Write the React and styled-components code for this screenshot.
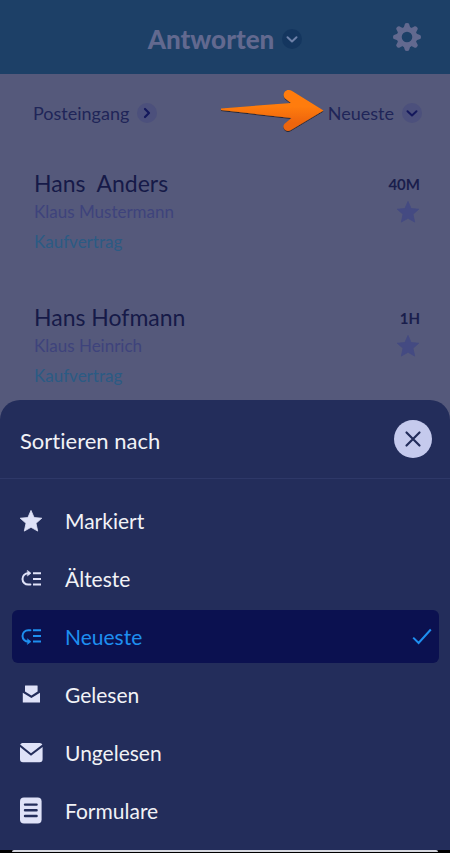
import { useState } from "react";
import styled, { createGlobalStyle } from "styled-components";

const GlobalStyle = createGlobalStyle`
  * {
    box-sizing: border-box;
  }

  body {
    margin: 0;
    background-color: #55597b;
    font-family: "Lato", "Open Sans", sans-serif;
    font-variant-ligatures: none;
  }
`;

const Wrapper = styled.div`
  position: relative;
  min-height: 100vh;
  overflow: hidden;
  background-color: #55597b;
`;

const Header = styled.header`
  display: grid;
  grid-template-columns: 1fr auto 1fr;
  align-items: center;
  height: 74px;
  padding: 0 28px;
  background-color: #1d4067;
`;

const PlainButton = styled.button`
  display: inline-flex;
  align-items: center;
  gap: 8px;
  padding: 0;
  border: 0;
  background: none;
  color: inherit;
  font: inherit;
  cursor: pointer;
`;

const TitleButton = styled(PlainButton)`
  grid-column: 2;
  padding-top: 4px;
  color: #62698f;
  font-size: 26px;
  line-height: 32px;
  font-weight: 900;
`;

const SettingsButton = styled(PlainButton)`
  justify-self: end;
  color: #62698f;
`;

const Round = styled.span`
  display: inline-flex;
  align-items: center;
  justify-content: center;
  width: 20px;
  height: 20px;
  border-radius: 50%;
  color: ${({ $dark }) => ($dark ? "#6d80a8" : "#14185c")};
  background-color: ${({ $dark }) => ($dark ? "#14365f" : "#4c507c")};
`;

const Filters = styled.div`
  display: flex;
  align-items: center;
  justify-content: space-between;
  height: 78px;
  padding: 0 28px 0 33px;
  color: #1f2558;
  font-size: 18px;
  line-height: 22px;
`;

const SortGroup = styled.div`
  display: flex;
  align-items: center;
  gap: 4px;
`;

const ArrowIcon = styled.svg`
  display: block;
  width: 104px;
  height: 44px;
  margin-bottom: 4px;
`;

const MailList = styled.ul`
  display: flex;
  flex-direction: column;
  gap: 44px;
  margin: 0;
  padding: 16px 30px 0 34px;
  list-style: none;
`;

const Mail = styled.li`
  display: flex;
  justify-content: space-between;
`;

const MailText = styled.div`
  display: flex;
  flex-direction: column;

  & h2 {
    margin: 0;
    color: #161a48;
    font-size: 23px;
    line-height: 30px;
    font-weight: 400;
    white-space: pre;
  }

  & p {
    margin: 0;
    color: #3e437c;
    font-size: 17px;
    line-height: 28px;
  }

  & a {
    color: #2b5b84;
    font-size: 17px;
    line-height: 32px;
    text-decoration: none;
  }
`;

const MailSide = styled.div`
  display: flex;
  flex-direction: column;
  align-items: flex-end;
  color: #1a1e4c;
  font-size: 15px;
  line-height: 32px;
  font-weight: 700;

  & button {
    color: #444a82;
  }
`;

const Sheet = styled.section`
  position: absolute;
  right: 0;
  bottom: 0;
  left: 0;
  overflow: hidden;
  border-radius: 20px 20px 0 0;
  background-color: #232d5b;
  color: #f1f2f6;
`;

const SheetHeader = styled.div`
  display: flex;
  align-items: center;
  justify-content: space-between;
  height: 79px;
  padding: 0 18px 0 20px;
  border-bottom: 1px solid #2e3868;

  & h1 {
    margin: 0;
    padding-top: 4px;
    font-size: 22px;
    line-height: 28px;
    font-weight: 400;
  }
`;

const CloseButton = styled(PlainButton)`
  justify-content: center;
  width: 38px;
  height: 38px;
  border-radius: 50%;
  background-color: #c5caed;
  color: #232d5b;
`;

const Options = styled.div`
  display: flex;
  flex-direction: column;
  gap: 5px;
  padding: 15px 11px 13px 12px;
`;

const Option = styled(PlainButton)`
  width: 100%;
  height: 53px;
  gap: 22px;
  padding: 0 7px;
  border-radius: 6px;
  background-color: ${({ $active }) => ($active ? "#0b1150" : "transparent")};
  color: ${({ $active }) => ($active ? "#1e8ff0" : "#f1f2f6")};
  font-size: 21px;
  line-height: 28px;
  text-align: left;

  & > svg {
    flex: none;
    color: ${({ $active }) => ($active ? "#1e8ff0" : "#dfe2f8")};
  }
`;

const OptionLabel = styled.span`
  flex-grow: 1;
`;

const BottomBar = styled.div`
  height: 3px;
  padding: 0 12px;
  background-color: #000;

  &::before {
    content: "";
    display: block;
    height: 2px;
    border-radius: 2px 2px 0 0;
    background-color: #d5d7df;
  }
`;

const stroke = {
  fill: "none",
  stroke: "currentColor",
  strokeLinecap: "round",
  strokeLinejoin: "round",
};

const ChevronDown = () => (
  <svg width="20" height="20" viewBox="0 0 20 20" {...stroke} strokeWidth="2">
    <path d="M5.5 8.2 10 12.4 14.5 8.2" />
  </svg>
);

const ChevronRight = () => (
  <svg width="20" height="20" viewBox="0 0 20 20" {...stroke} strokeWidth="2.2">
    <path d="M8 6 12 10 8 14" />
  </svg>
);

const Gear = () => (
  <svg width="30" height="30" viewBox="-15 -15 30 30" fill="none">
    <circle r="7.8" stroke="currentColor" strokeWidth="5" />
    {[0, 45, 90, 135, 180, 225, 270, 315].map((angle) => (
      <path
        key={angle}
        d="M-3.4-9-2.1-13Q-1.9-14 0-14Q1.9-14 2.1-13L3.4-9Z"
        fill="currentColor"
        transform={`rotate(${angle})`}
      />
    ))}
  </svg>
);

const Star = () => (
  <svg width="24" height="24" viewBox="0 0 24 24" fill="currentColor">
    <path
      d="M12 1.4 15.1 8.5 22.8 9.2 17 14.3 18.7 22.1 12 18.3 5.3 22.1 7 14.3 1.2 9.2 8.9 8.5Z"
      stroke="currentColor"
      strokeWidth="0.8"
      strokeLinejoin="round"
    />
  </svg>
);

const Oldest = () => (
  <svg width="24" height="24" viewBox="0 0 24 24" {...stroke} strokeWidth="2">
    <path d="M11.4 17.6H9.2A5.5 5.5 0 0 1 9.2 6.2H10" />
    <path d="M8.6 3.6 12 6.2 8.6 8.8Z" fill="currentColor" strokeWidth="0.6" />
    <path d="M14 6.2H22M14 11.9H22M14 17.6H22" strokeLinecap="butt" />
  </svg>
);

const Newest = () => (
  <svg width="24" height="24" viewBox="0 0 24 24" {...stroke} strokeWidth="2">
    <path d="M11.4 5.2H9.2A5.5 5.5 0 0 0 9.2 16.6H10" />
    <path d="M8.6 14 12 16.6 8.6 19.2Z" fill="currentColor" strokeWidth="0.6" />
    <path d="M14 5.2H22M14 10.9H22M14 16.6H22" strokeLinecap="butt" />
  </svg>
);

const MailRead = () => (
  <svg width="24" height="24" viewBox="0 0 24 24" fill="currentColor">
    <path d="M6 2.8Q6 2.4 6.4 2.4H18.2Q18.6 2.4 18.6 2.8V8.6L12.4 12.4 6 8.6Z" />
    <path d="M3.8 9.8 12.4 15 21 9.8V19.4H3.8Z" />
  </svg>
);

const MailUnread = () => (
  <svg width="24" height="24" viewBox="0 0 24 24" fill="currentColor">
    <path d="M3.4 2H20.8Q22.6 2 23.4 3.6L12 12.2 1.2 3.6Q1.8 2 3.4 2Z" />
    <path d="M1 6 12 14.8 23.6 6V18.2Q23.6 21.2 20.6 21.2H4Q1 21.2 1 18.2Z" />
  </svg>
);

const Forms = () => (
  <svg width="24" height="28" viewBox="0 0 24 28">
    <rect x="1" y="0.5" width="21.6" height="26" rx="4" fill="currentColor" />
    <path
      d="M6 7.6H17.6M6 13.3H17.6M6 19H17.6"
      stroke="#232d5b"
      strokeWidth="2.4"
      strokeLinecap="round"
    />
  </svg>
);

const Check = () => (
  <svg width="20" height="20" viewBox="0 0 20 20" {...stroke} strokeWidth="2">
    <path d="M1.2 10.6 6.6 16 18.8 2.5" strokeLinecap="butt" strokeLinejoin="miter" />
  </svg>
);

const Close = () => (
  <svg width="20" height="20" viewBox="0 0 20 20" {...stroke} strokeWidth="2.2">
    <path d="M3.5 3.5 16.5 16.5M16.5 3.5 3.5 16.5" />
  </svg>
);

const Arrow = () => (
  <ArrowIcon viewBox="0 0 104 44" aria-hidden="true">
    <defs>
      <linearGradient id="arrow" x1="0" y1="0" x2="0" y2="1">
        <stop offset="0.4" stopColor="#ff7c08" />
        <stop offset="0.8" stopColor="#ee6508" />
      </linearGradient>
      <filter id="arrowShadow">
        <feDropShadow dx="0" dy="1" stdDeviation="0.5" floodOpacity="0.6" />
      </filter>
    </defs>
    <path
      d="M1 19.4 71 14 65.5 9.8C62 7 64 1 68.5 1C70 1 71.2 1.4 72.5 2.2L103.5 21.6 70.5 41.2C65.5 44 60.5 37.6 65.5 34L71.5 29 1 21Z"
      fill="url(#arrow)"
      filter="url(#arrowShadow)"
    />
  </ArrowIcon>
);

const mails = [
  { name: "Hans  Anders", from: "Klaus Mustermann", form: "Kaufvertrag", age: "40M" },
  { name: "Hans Hofmann", from: "Klaus Heinrich", form: "Kaufvertrag", age: "1H" },
];

const options = [
  { label: "Markiert", Icon: Star },
  { label: "Älteste", Icon: Oldest },
  { label: "Neueste", Icon: Newest },
  { label: "Gelesen", Icon: MailRead },
  { label: "Ungelesen", Icon: MailUnread },
  { label: "Formulare", Icon: Forms },
];

const App = () => {
  const [sort, setSort] = useState("Neueste");
  const [open, setOpen] = useState(true);

  return (
    <Wrapper>
      <GlobalStyle />
      <Header>
        <TitleButton>
          Antworten
          <Round $dark>
            <ChevronDown />
          </Round>
        </TitleButton>
        <SettingsButton aria-label="Einstellungen">
          <Gear />
        </SettingsButton>
      </Header>
      <Filters>
        <PlainButton>
          Posteingang
          <Round>
            <ChevronRight />
          </Round>
        </PlainButton>
        <SortGroup>
          <Arrow />
          <PlainButton onClick={() => setOpen(true)}>
            {sort}
            <Round>
              <ChevronDown />
            </Round>
          </PlainButton>
        </SortGroup>
      </Filters>
      <MailList>
        {mails.map((mail) => (
          <Mail key={mail.name}>
            <MailText>
              <h2>{mail.name}</h2>
              <p>{mail.from}</p>
              <a href="#kaufvertrag">{mail.form}</a>
            </MailText>
            <MailSide>
              {mail.age}
              <PlainButton aria-label="Markieren">
                <Star />
              </PlainButton>
            </MailSide>
          </Mail>
        ))}
      </MailList>
      {open && (
        <Sheet>
          <SheetHeader>
            <h1>Sortieren nach</h1>
            <CloseButton aria-label="Schließen" onClick={() => setOpen(false)}>
              <Close />
            </CloseButton>
          </SheetHeader>
          <Options>
            {options.map(({ label, Icon }) => (
              <Option
                key={label}
                $active={label === sort}
                onClick={() => setSort(label)}
              >
                <Icon />
                <OptionLabel>{label}</OptionLabel>
                {label === sort && <Check />}
              </Option>
            ))}
          </Options>
          <BottomBar />
        </Sheet>
      )}
    </Wrapper>
  );
};

export default App;
